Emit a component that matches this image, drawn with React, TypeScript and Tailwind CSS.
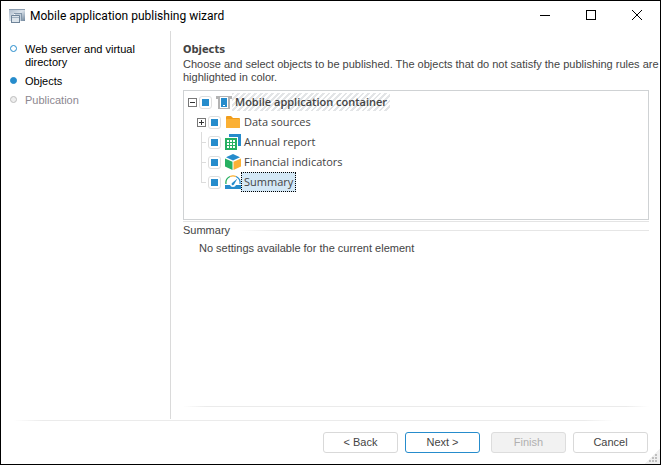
import { ReactNode, useEffect, useRef, useState } from "react";

type Step = {
    label: string;
    state: "done" | "current" | "disabled";
}

type TreeItem = {
    id: string;
    label: string;
    icon: ReactNode;
    expandable?: boolean;
}

const steps: Step[] = [
    { label: "Web server and virtual directory", state: "done" },
    { label: "Objects", state: "current" },
    { label: "Publication", state: "disabled" },
];

const dotStyles = {
    done: "border-[#268ccc] bg-white",
    current: "border-[#268ccc] bg-[#268ccc]",
    disabled: "border-[#bdbdbd] bg-[#eeeeee]",
};

function WizardIcon() {
    return (
        <svg width="16" height="14" viewBox="0 0 16 14">
            <defs>
                <linearGradient id="panel" x1="0" y1="0" x2="1" y2="1">
                    <stop offset="0" stopColor="#a9b8c8" />
                    <stop offset=".5" stopColor="#dbe3eb" />
                    <stop offset="1" stopColor="#70869c" />
                </linearGradient>
            </defs>
            <path d="M0 0h16v12H0z" fill="url(#panel)" />
            <path d="M0 0h16v1H0z" fill="#8b9db0" />
            <path d="M5.500 4.500h7v8h-7z" fill="#c3cfdb" stroke="#fff" />
            <path d="M5 4h8v1H5zM12 4h1v8h-1z" fill="#8497aa" />
            <path d="M2 7q0-1 1-1h7q1 0 1 1v7H2z" fill="#6f8499" />
            <path d="M3 7h7v6H3z" fill="#dce4eb" />
            <path d="M3 8h7v1H3z" fill="#9fb0c0" />
        </svg>
    )
}

function ContainerIcon() {
    return (
        <svg width="16" height="13" viewBox="0 0 16 13" shapeRendering="crispEdges">
            <path d="M0 0h16v3h-2v10H2V3H0z" fill="#b3b3b3" />
            <path d="M4 1h8v11H4z" fill="#fff" />
            <path d="M5 2h6v9H5z" fill="#268ccc" />
            <path d="M7 9h2v1H7z" fill="#fff" />
        </svg>
    )
}

function FolderIcon() {
    return (
        <svg width="16" height="16" viewBox="0 0 16 16">
            <path d="M1 3q0-1 1-1h4l2 2h6q1 0 1 1v8q0 1-1 1H2q-1 0-1-1z" fill="#f09d1c" />
            <path d="M1 6q0-1 1-1h12q1 0 1 1v7q0 1-1 1H2q-1 0-1-1z" fill="#fbb034" />
        </svg>
    )
}

function ReportIcon() {
    return (
        <svg width="16" height="16" viewBox="0 0 16 16" shapeRendering="crispEdges">
            <path d="M4 0h12v12h-3V3H4z" fill="#268ccc" />
            <path d="M0 4h12v12H0z" fill="#27b062" />
            <path d="M2 6h2v2H2zM5 6h2v2H5zM8 6h2v2H8zM2 9h2v2H2zM5 9h2v2H5zM8 9h2v2H8zM2 12h2v2H2zM5 12h2v2H5zM8 12h2v2H8z" fill="#fff" />
        </svg>
    )
}

function CubeIcon() {
    return (
        <svg width="16" height="16" viewBox="0 0 16 16">
            <path d="M8 0l7 3.200-7 3.200-7-3.200z" fill="#268ccc" />
            <path d="M0 4.500l7.500 3.200V16L0 12.500z" fill="#27b062" />
            <path d="M16 4.500L8.500 7.700V16l7.500-3.500z" fill="#fbb034" />
        </svg>
    )
}

function GaugeIcon() {
    return (
        <svg width="16" height="14" viewBox="0 0 16 14">
            <path d="M1 9a7 7 0 0 1 4-7.500" fill="none" stroke="#27b062" strokeWidth="1.300" />
            <path d="M5 1.500a7 7 0 0 1 6 0" fill="none" stroke="#fbb034" strokeWidth="1.300" />
            <path d="M11 1.500A7 7 0 0 1 15 9" fill="none" stroke="#268ccc" strokeWidth="1.300" />
            <path d="M0 10h5q.5 2 3 2t3-2h5v4H0z" fill="#268ccc" />
            <path d="M12.500 3.500L9 9.500q-1 1.200-2 .4t0-2z" fill="#268ccc" />
        </svg>
    )
}

const children: TreeItem[] = [
    { id: "sources", label: "Data sources", icon: <FolderIcon />, expandable: true },
    { id: "report", label: "Annual report", icon: <ReportIcon /> },
    { id: "indicators", label: "Financial indicators", icon: <CubeIcon /> },
    { id: "summary", label: "Summary", icon: <GaugeIcon /> },
];

function Expander({ open, label }: { open: boolean; label: string }) {
    return (
        <button type="button" aria-label={label} aria-expanded={open} className="block h-[9px] w-[9px] shrink-0 bg-white">
            <svg width="9" height="9" viewBox="0 0 9 9" shapeRendering="crispEdges">
                <path d="M.5.5h8v8h-8z" fill="none" stroke="#777777" />
                <path d={open ? "M2 4.500h5" : "M2 4.500h5M4.500 2v5"} fill="none" stroke="#333333" />
            </svg>
        </button>
    )
}

// The boxes start in the third state: some of the nested objects are picked.
function TriCheckbox({ id }: { id: string }) {
    const ref = useRef<HTMLInputElement>(null);

    useEffect(() => {
        if (ref.current) ref.current.indeterminate = true;
    }, []);

    return (
        <input
            ref={ref}
            id={id}
            type="checkbox"
            className="h-[13px] w-[13px] shrink-0 appearance-none rounded-[3px] border border-[#dedede] bg-white p-[2px] bg-clip-content indeterminate:bg-[#268ccc] checked:bg-[#268ccc]"
        />
    )
}

function WindowControls() {
    return (
        <div className="flex self-start">
            <button type="button" aria-label="Minimize" className="flex h-7 w-[46px] items-center justify-center">
                <svg width="10" height="10" viewBox="0 0 10 10" shapeRendering="crispEdges"><path d="M0 5.500h10" stroke="#000" /></svg>
            </button>
            <button type="button" aria-label="Maximize" className="flex h-7 w-[46px] items-center justify-center">
                <svg width="10" height="10" viewBox="0 0 10 10" shapeRendering="crispEdges"><path d="M.5.5h9v9h-9z" fill="none" stroke="#000" /></svg>
            </button>
            <button type="button" aria-label="Close" className="flex h-7 w-[46px] items-center justify-center">
                <svg width="10" height="10" viewBox="0 0 10 10"><path d="M0 0l10 10M10 0L0 10" stroke="#000" /></svg>
            </button>
        </div>
    )
}

export default function App() {
    const [selected, setSelected] = useState("summary");

    return (
        <div className="relative flex min-h-screen flex-col border border-black bg-white font-['Liberation_Sans',sans-serif] text-[11px] leading-[13px] text-[#444444]">
            <header className="flex h-[30px] items-center justify-between pl-2">
                <div className="flex items-center gap-[5px] font-['Roboto',sans-serif] text-[12px] text-black">
                    <WizardIcon />
                    <h1>Mobile application publishing wizard</h1>
                </div>
                <WindowControls />
            </header>

            <div className="flex flex-1">
                <nav className="w-[170px] shrink-0 border-r border-[#dadada] pt-3 pr-8 pl-[9px]">
                    <ol className="flex flex-col gap-[6px]">
                        {steps.map((step) => (
                            <li key={step.label} className={step.state === "disabled" ? "flex gap-2 text-[#8c8790]" : "flex gap-2 text-black"}>
                                <span className={`mt-[2px] h-[7px] w-[7px] shrink-0 rounded-full border ${dotStyles[step.state]}`} />
                                {step.label}
                            </li>
                        ))}
                    </ol>
                </nav>

                <main className="flex min-w-0 flex-1 flex-col pt-3 pr-[11px] pb-3 pl-3">
                    <h2 className="font-['DejaVu_Sans_Condensed','DejaVu_Sans',sans-serif] font-bold">Objects</h2>
                    <p className="mt-[2px] -mr-[11px]">
                        Choose and select objects to be published. The objects that do not satisfy the publishing rules are highlighted in color.
                    </p>

                    <div className="mt-[6px] h-[130px] border border-[#cfd2d4] pt-px pl-1 font-['Open_Sans',sans-serif] leading-[18px]">
                        <div className="flex h-5 items-center">
                            <Expander open label="Mobile application container" />
                            <div className="ml-[2px] flex items-center gap-1">
                                <TriCheckbox id="container" />
                                <ContainerIcon />
                            </div>
                            <label htmlFor="container" className="bg-[repeating-linear-gradient(135deg,#e3e5e7_0px,#e3e5e7_2px,#ffffff_2px,#ffffff_4px)] px-[3px] font-semibold">
                                Mobile application container
                            </label>
                        </div>
                        <ul className="pl-[9px]">
                            {children.map((item) => (
                                <li key={item.id} className="flex h-5 items-center">
                                    {item.expandable ? <Expander open={false} label={item.label} /> : (
                                        <svg width="9" height="20" viewBox="0 0 9 20" shapeRendering="crispEdges">
                                            <path d={item.id === "summary" ? "M4.500 0v10.500H9" : "M4.500 0v20M5 10.500h4"} fill="none" stroke="#dcdcdc" />
                                        </svg>
                                    )}
                                    <div className="ml-[2px] flex items-center gap-1">
                                        <TriCheckbox id={item.id} />
                                        {item.icon}
                                    </div>
                                    <label
                                        htmlFor={item.id}
                                        onClick={() => setSelected(item.id)}
                                        className={selected === item.id ? "border border-dotted border-black bg-[#d4e8f6] px-[2px]" : "px-[3px]"}
                                    >
                                        {item.label}
                                    </label>
                                </li>
                            ))}
                        </ul>
                    </div>

                    <section className="mt-px border-t border-[#e4e4e4] pt-[2px]">
                        <div className="flex items-center gap-2">
                            <h3>Summary</h3>
                            <div className="h-px flex-1 bg-linear-to-r from-white via-[#e6e6e6] via-10% to-[#e6e6e6]" />
                        </div>
                        <p className="mt-[5px] pl-4">No settings available for the current element</p>
                    </section>

                    <div className="mt-auto h-px bg-[linear-gradient(to_right,#ffffff,#ebebeb_5%,#ebebeb_95%,#ffffff)]" />
                </main>
            </div>

            <footer className="pt-px pr-3 pb-[11px] pl-3">
                <div className="mr-[34px] h-px bg-[linear-gradient(to_right,#ffffff,#ebebeb_5%,#ebebeb_95%,#ffffff)]" />
                <div className="mt-[11px] flex justify-end gap-[7px]">
                    <button type="button" className="h-[21px] w-[75px] rounded-[3px] border border-[#d9d9d9]">&lt; Back</button>
                    <button type="button" className="h-[21px] w-[75px] rounded-[3px] border border-[#268ccc]">Next &gt;</button>
                    <button type="button" disabled className="ml-1 h-[21px] w-[75px] rounded-[3px] border border-[#dddddd] bg-[#f2f2f2] text-[#b0b0b0]">Finish</button>
                    <button type="button" className="h-[21px] w-[75px] rounded-[3px] border border-[#d9d9d9]">Cancel</button>
                </div>
            </footer>

            <svg width="16" height="16" viewBox="0 0 16 16" className="absolute right-0 bottom-0" shapeRendering="crispEdges">
                <path d="M16 0v16H0z" fill="#f0f0f0" />
                <path d="M11 6h2v2h-2zM8 9h2v2H8zM11 9h2v2h-2zM5 12h2v2H5zM8 12h2v2H8zM11 12h2v2h-2z" fill="#bfbfbf" />
            </svg>
        </div>
    )
}
